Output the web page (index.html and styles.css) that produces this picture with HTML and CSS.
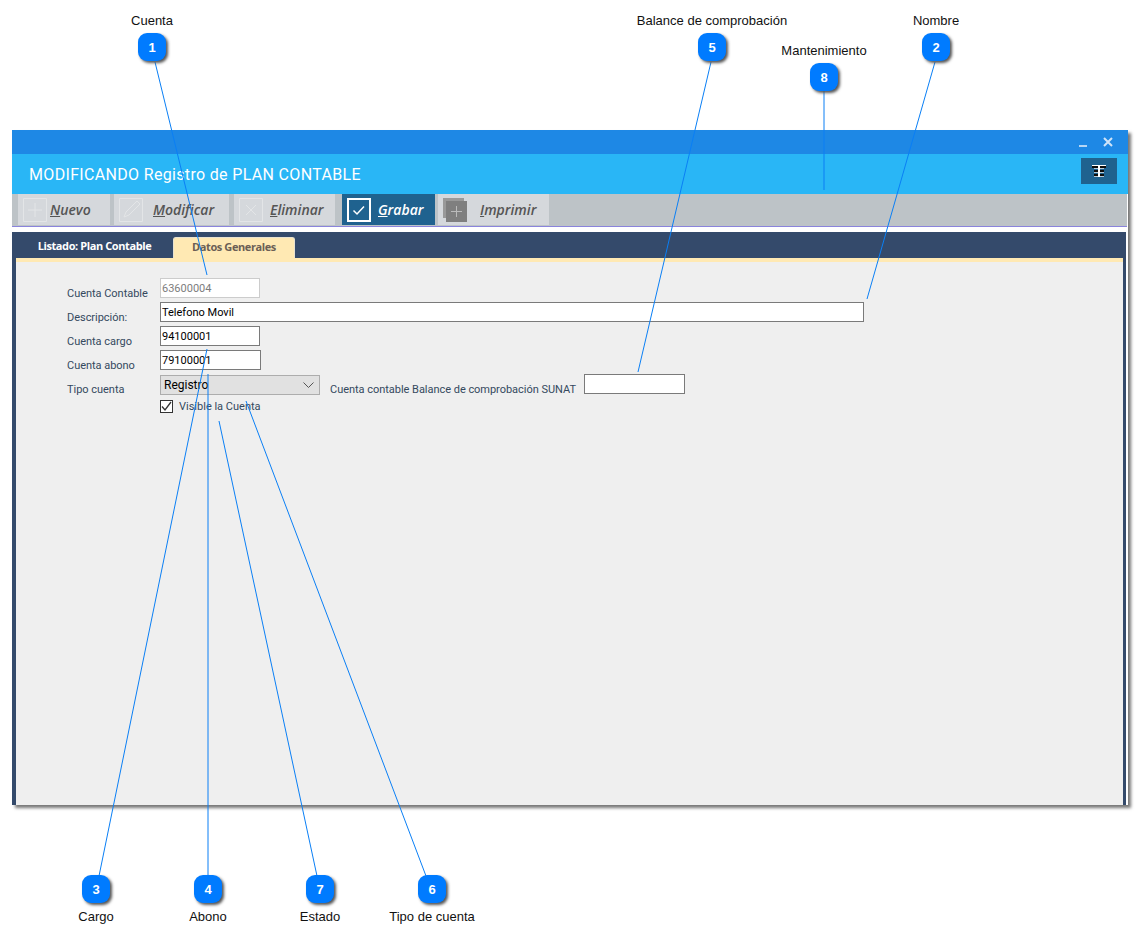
FILE: index.html
```html
<!DOCTYPE html>
<html lang="es">
  <head>
    <meta charset="UTF-8" />
    <title>Plan Contable</title>
    <link rel="stylesheet" href="styles.css">
  </head>
  <body>
    <div class="page">
      <div class="window">
        <div class="titlebar">
          <span class="win-min"></span>
          <svg class="win-close" width="10" height="10" viewBox="0 0 10 10"><path d="M1 1 9 9M9 1 1 9" /></svg>
        </div>
        <div class="header">
          <h1>MODIFICANDO Registro de PLAN CONTABLE</h1>
          <button class="filter-btn">
            <svg width="14" height="12" viewBox="0 0 14 12">
              <path d="M0 0h14v1h-14z" fill="#fff" />
              <path d="M0 1h14v2h-14zM2 5h10v2h-10zM2 9h10v2h-10z" fill="#0c0c0c" />
              <path d="M2 3h10v1h-10zM2 7h10v1h-10zM2 11h10v1h-10z" fill="#b8c8d4" />
              <path d="M6 0h2v12h-2z" fill="#fff" />
            </svg>
          </button>
        </div>
        <div class="toolbar">
          <a class="tool tool-nuevo">
            <svg class="ico" width="24" height="24" viewBox="0 0 24 24"><path d="M.5.5h23v23H.5z" /><path d="M12 5v14M5 12h14" /></svg>
            <span><u>N</u>uevo</span>
          </a>
          <a class="tool tool-modificar">
            <svg class="ico" width="24" height="24" viewBox="0 0 24 24"><path d="M.5.5h23v23H.5z" /><path d="M5 19l2-5L18 3l3 3L10 17z" /></svg>
            <span><u>M</u>odificar</span>
          </a>
          <a class="tool tool-eliminar">
            <svg class="ico" width="24" height="24" viewBox="0 0 24 24"><path d="M.5.5h23v23H.5z" /><path d="M7 7l10 10M17 7L7 17" /></svg>
            <span><u>E</u>liminar</span>
          </a>
          <a class="tool tool-grabar">
            <svg class="ico" width="24" height="24" viewBox="0 0 24 24"><path d="M1 1h22v22H1z" stroke-width="2" /><path d="M6.5 12.5l3.5 3.5 7-7.5" stroke-width="1.5" /></svg>
            <span><u>G</u>rabar</span>
          </a>
          <a class="tool tool-imprimir">
            <svg class="ico" width="24" height="24" viewBox="0 0 24 24">
              <rect x="0" y="0" width="21" height="20" fill="#999" />
              <rect x="3" y="3" width="21" height="21" fill="#7f7f7f" />
              <path d="M13.5 8v11M8 13.5h11" stroke="#bbb" />
            </svg>
            <span><u>I</u>mprimir</span>
          </a>
        </div>
        <div class="panel">
          <div class="tabs">
            <span class="tab">Listado: Plan Contable</span>
            <span class="tab tab-active">Datos Generales</span>
          </div>
          <div class="tab-body">
            <div class="row">
              <label>Cuenta Contable</label>
              <input class="field field-ro" type="text" value="63600004" readonly>
            </div>
            <div class="row">
              <label>Descripción:</label>
              <input class="field field-wide" type="text" value="Telefono Movil">
            </div>
            <div class="row">
              <label>Cuenta cargo</label>
              <input class="field" type="text" value="94100001">
            </div>
            <div class="row">
              <label>Cuenta abono</label>
              <input class="field field-abono" type="text" value="79100001">
            </div>
            <div class="row row-tipo">
              <label>Tipo cuenta</label>
              <div class="select">
                <span>Registro</span>
                <svg width="11" height="6" viewBox="0 0 11 6"><path d="M.5.5l5 5 5-5" /></svg>
              </div>
              <label class="label-sunat">Cuenta contable Balance de comprobación SUNAT</label>
              <input class="field field-sunat" type="text">
            </div>
            <div class="row-check">
              <span class="check">
                <svg width="13" height="13" viewBox="0 0 13 13"><path d="M2 6.5l3 3.5 6-8" /></svg>
              </span>
              <span>Visible la Cuenta</span>
            </div>
          </div>
        </div>
      </div>

      <svg class="lines" width="1143" height="940" viewBox="0 0 1143 940">
        <path d="M155 62 207 275" />
        <path d="M711 62 638 372" />
        <path d="M935 62 867 299" />
        <path d="M824 91V190" />
        <path d="M99 876 207 349" />
        <path d="M208 876V374" />
        <path d="M317 876 219 421" />
        <path d="M426 876 246 401" />
      </svg>

      <div class="callout c-1"><span class="callout-label">Cuenta</span><b class="badge">1</b></div>
      <div class="callout c-5"><span class="callout-label">Balance de comprobación</span><b class="badge">5</b></div>
      <div class="callout c-2"><span class="callout-label">Nombre</span><b class="badge">2</b></div>
      <div class="callout c-8"><span class="callout-label">Mantenimiento</span><b class="badge">8</b></div>
      <div class="callout callout-bottom c-3"><b class="badge">3</b><span class="callout-label">Cargo</span></div>
      <div class="callout callout-bottom c-4"><b class="badge">4</b><span class="callout-label">Abono</span></div>
      <div class="callout callout-bottom c-7"><b class="badge">7</b><span class="callout-label">Estado</span></div>
      <div class="callout callout-bottom c-6"><b class="badge">6</b><span class="callout-label">Tipo de cuenta</span></div>
    </div>
  </body>
</html>
```

FILE: styles.css
```css
*,
*::before,
*::after {
  box-sizing: border-box;
}

body {
  margin: 0;
  background-color: #fff;
  font-family: Roboto, "Liberation Sans", sans-serif;
}

.page {
  position: relative;
  width: 1143px;
  height: 940px;
  padding: 130px 15px 0 12px;
  overflow: hidden;
}

.window {
  height: 675px;
  display: flex;
  flex-direction: column;
  background-color: #fff;
  box-shadow: 3px 3px 3px #777;
}

.titlebar {
  height: 24px;
  flex: none;
  display: flex;
  align-items: flex-start;
  justify-content: flex-end;
  gap: 16px;
  padding: 7px 15px 0 0;
  background-color: #1e88e5;
}

.win-min {
  width: 8px;
  height: 2px;
  margin-top: 8px;
  background-color: #b5d6f5;
}

.win-close path {
  fill: none;
  stroke: #cfe4f8;
  stroke-width: 2;
}

.header {
  height: 40px;
  flex: none;
  display: flex;
  align-items: center;
  justify-content: space-between;
  padding: 0 11px 0 17px;
  background-color: #29b6f6;
}

.header h1 {
  margin: 0;
  color: #fff;
  font-size: 16px;
  font-weight: 400;
  letter-spacing: 0.33px;
}

.filter-btn {
  width: 36px;
  height: 26px;
  display: flex;
  align-items: center;
  justify-content: center;
  padding: 0;
  margin-bottom: 6px;
  border: 0;
  background-color: #1f628f;
}

.toolbar {
  height: 33px;
  flex: none;
  display: flex;
  padding: 0 1px 1px 6px;
  margin-right: 1px;
  background-color: #bdc3c7;
  border-bottom: 1px solid #8a84dc;
}

.tool {
  height: 31px;
  display: flex;
  align-items: center;
  padding-left: 5px;
  background-color: #d5d8dc;
  color: #555;
  font-family: "Open Sans", sans-serif;
  font-size: 14px;
  font-style: italic;
  font-weight: 600;
}

.ico {
  flex: none;
}

.ico path {
  fill: none;
  stroke: #e3e5e7;
}

.tool-nuevo {
  width: 92px;
  gap: 3px;
}

.tool-modificar {
  width: 115px;
  margin-left: 4px;
  gap: 10px;
}

.tool-eliminar {
  width: 101px;
  margin-left: 5px;
  gap: 7px;
}

.tool-grabar {
  width: 93px;
  margin-left: 7px;
  gap: 7px;
  background-color: #1f628f;
  color: #fff;
}

.tool-grabar .ico path {
  stroke: #fff;
}

.tool-imprimir {
  width: 111px;
  margin-left: 3px;
  gap: 13px;
}

.tool-imprimir .ico path {
  stroke: #bbb;
}

.panel {
  flex: 1;
  display: flex;
  flex-direction: column;
  margin: 5px 2px 0 0;
  padding: 0 3px 0 4px;
  background-color: #344a6b;
}

.tabs {
  height: 26px;
  flex: none;
  display: flex;
  align-items: flex-end;
  padding-left: 6px;
}

.tab {
  height: 21px;
  width: 151px;
  padding: 1px 6px 0 0;
  text-align: center;
  color: #fff;
  font-family: "Open Sans", sans-serif;
  font-size: 11px;
  font-weight: 700;
  letter-spacing: -0.4px;
}

.tab-active {
  width: 122px;
  padding-right: 0;
  background-color: #ffe9b3;
  border-radius: 3px 3px 0 0;
  border: 1px solid #e8e2d0;
  border-bottom: 0;
  color: #6b5f55;
}

.tab-body {
  flex: 1;
  padding: 16px 0 0 51px;
  background-color: #efefef;
  border-top: 4px solid #ffe9b3;
  color: #34495e;
  font-size: 11px;
}

.row {
  display: flex;
  height: 20px;
  margin-bottom: 4px;
}

.row label {
  width: 93px;
  flex: none;
  padding-top: 9px;
  line-height: 14px;
  letter-spacing: -0.03px;
}

.row .label-sunat {
  width: auto;
  margin: 0 8px 0 10px;
  padding-top: 8px;
}

.row-tipo {
  margin-top: 5px;
  margin-bottom: 5px;
}

.row-tipo label {
  padding-top: 8px;
}

.field {
  width: 100px;
  height: 20px;
  padding: 0 1px;
  border: 1px solid #7a7a7a;
  border-radius: 0;
  background-color: #fff;
  color: #000;
  font-family: Roboto, "Liberation Sans", sans-serif;
  font-size: 11px;
  outline: none;
}

.field-ro {
  border-color: #ccc;
  color: #7d7d7d;
}

.field-wide {
  width: 704px;
}

.field-abono {
  width: 101px;
}

.field-sunat {
  width: 101px;
  margin-top: -1px;
}

.select {
  width: 160px;
  height: 20px;
  flex: none;
  display: flex;
  align-items: center;
  justify-content: space-between;
  padding: 0 5px 0 3px;
  background-color: #e1e1e1;
  border: 1px solid #adadad;
  color: #000;
  font-size: 12px;
}

.select path {
  fill: none;
  stroke: #555;
}

.row-check {
  display: flex;
  align-items: center;
  gap: 6px;
  height: 13px;
  padding-left: 93px;
}

.check {
  width: 13px;
  height: 13px;
  display: block;
  background-color: #fff;
  border: 1px solid #333;
}

.check svg {
  display: block;
  margin: -1px;
}

.check path {
  fill: none;
  stroke: #333;
  stroke-width: 1.3;
}

/* callouts sit on top of the screenshot */
.lines {
  position: absolute;
  top: 0;
  left: 0;
  pointer-events: none;
}

.lines path {
  fill: none;
  stroke: #0a7ff5;
  stroke-width: 1;
}

.callout {
  position: absolute;
  width: 200px;
  display: flex;
  flex-direction: column;
  align-items: center;
  gap: 6px;
  color: #111;
  font-family: "Liberation Sans", sans-serif;
  font-size: 13px;
}

.callout-label {
  height: 14px;
  line-height: 15px;
}

.callout-bottom .callout-label {
  line-height: 16px;
}

.badge {
  width: 28px;
  height: 28px;
  display: flex;
  align-items: center;
  justify-content: center;
  background-color: #007bff;
  border-radius: 9px;
  box-shadow: 2px 2px 3px #555;
  color: #fff;
  font-size: 13px;
}

.c-1 { left: 52px; top: 13px; }
.c-5 { left: 612px; top: 13px; }
.c-2 { left: 836px; top: 13px; }
.c-8 { left: 724px; top: 43px; }
.c-3 { left: -4px; top: 875px; }
.c-4 { left: 108px; top: 875px; }
.c-7 { left: 220px; top: 875px; }
.c-6 { left: 332px; top: 875px; }
```
